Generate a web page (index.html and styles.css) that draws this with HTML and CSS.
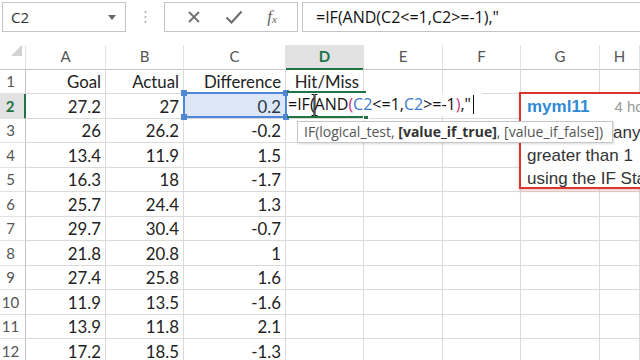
FILE: index.html
```html
<!DOCTYPE html>
<html lang="en">
<head>
  <meta charset="UTF-8" />
  <title>Excel - Hit/Miss</title>
  <link rel="stylesheet" href="styles.css">
</head>
<body>
  <div class="topbar">
    <div class="namebox">
      <span>C2</span>
      <svg width="8" height="5" viewBox="0 0 8 5"><path d="M0 0h8L4 5z" fill="#666"/></svg>
    </div>
    <div class="grip">
      <svg width="3" height="14" viewBox="0 0 3 14"><circle cx="1.5" cy="2" r="1" fill="#aaa"/><circle cx="1.5" cy="7" r="1" fill="#aaa"/><circle cx="1.5" cy="12" r="1" fill="#aaa"/></svg>
    </div>
    <div class="fxbox">
      <svg width="14" height="14" viewBox="0 0 14 14"><path d="M2 2l10 10M12 2L2 12" stroke="#707070" stroke-width="1.8" fill="none"/></svg>
      <svg width="18" height="14" viewBox="0 0 18 14"><path d="M1.5 7.5l5 5L16.5 1.5" stroke="#707070" stroke-width="2.2" fill="none"/></svg>
      <span class="fx">f<sub>x</sub></span>
    </div>
    <div class="formula">=IF(AND(C2&lt;=1,C2&gt;=-1),"</div>
  </div>

  <div class="sheet">
    <div class="row head">
      <div class="corner"><svg width="11" height="11" viewBox="0 0 11 11"><path d="M11 0v11H0z" fill="#d2d2d2"/></svg></div>
      <div class="ch">A</div><div class="ch">B</div><div class="ch">C</div>
      <div class="ch on">D</div><div class="ch">E</div><div class="ch">F</div>
      <div class="ch">G</div><div class="ch">H</div>
    </div>
    <div class="row">
      <div class="rh">1</div>
      <div class="c">Goal</div><div class="c">Actual</div><div class="c">Difference</div>
      <div class="c">Hit/Miss</div><div class="c"></div><div class="c"></div><div class="c"></div><div class="c"></div>
    </div>
    <div class="row">
      <div class="rh on">2</div>
      <div class="c">27.2</div><div class="c">27</div><div class="c">0.2</div>
      <div class="c"></div><div class="c"></div><div class="c"></div><div class="c"></div><div class="c"></div>
    </div>
    <div class="row">
      <div class="rh">3</div>
      <div class="c">26</div><div class="c">26.2</div><div class="c">-0.2</div>
      <div class="c"></div><div class="c"></div><div class="c"></div><div class="c"></div><div class="c"></div>
    </div>
    <div class="row">
      <div class="rh">4</div>
      <div class="c">13.4</div><div class="c">11.9</div><div class="c">1.5</div>
      <div class="c"></div><div class="c"></div><div class="c"></div><div class="c"></div><div class="c"></div>
    </div>
    <div class="row">
      <div class="rh">5</div>
      <div class="c">16.3</div><div class="c">18</div><div class="c">-1.7</div>
      <div class="c"></div><div class="c"></div><div class="c"></div><div class="c"></div><div class="c"></div>
    </div>
    <div class="row">
      <div class="rh">6</div>
      <div class="c">25.7</div><div class="c">24.4</div><div class="c">1.3</div>
      <div class="c"></div><div class="c"></div><div class="c"></div><div class="c"></div><div class="c"></div>
    </div>
    <div class="row">
      <div class="rh">7</div>
      <div class="c">29.7</div><div class="c">30.4</div><div class="c">-0.7</div>
      <div class="c"></div><div class="c"></div><div class="c"></div><div class="c"></div><div class="c"></div>
    </div>
    <div class="row">
      <div class="rh">8</div>
      <div class="c">21.8</div><div class="c">20.8</div><div class="c">1</div>
      <div class="c"></div><div class="c"></div><div class="c"></div><div class="c"></div><div class="c"></div>
    </div>
    <div class="row">
      <div class="rh">9</div>
      <div class="c">27.4</div><div class="c">25.8</div><div class="c">1.6</div>
      <div class="c"></div><div class="c"></div><div class="c"></div><div class="c"></div><div class="c"></div>
    </div>
    <div class="row">
      <div class="rh">10</div>
      <div class="c">11.9</div><div class="c">13.5</div><div class="c">-1.6</div>
      <div class="c"></div><div class="c"></div><div class="c"></div><div class="c"></div><div class="c"></div>
    </div>
    <div class="row">
      <div class="rh">11</div>
      <div class="c">13.9</div><div class="c">11.8</div><div class="c">2.1</div>
      <div class="c"></div><div class="c"></div><div class="c"></div><div class="c"></div><div class="c"></div>
    </div>
    <div class="row">
      <div class="rh">12</div>
      <div class="c">17.2</div><div class="c">18.5</div><div class="c">-1.3</div>
      <div class="c"></div><div class="c"></div><div class="c"></div><div class="c"></div><div class="c"></div>
    </div>

    <!-- C2 range reference -->
    <div class="ref">
      <i class="h tl"></i><i class="h tr"></i><i class="h bl"></i><i class="h br"></i>
    </div>

    <!-- active cell D2 being edited -->
    <div class="active"><i class="fill"></i></div>
    <div class="edit">=IF(AND<span class="p">(</span><span class="b">C2</span>&lt;=1,<span class="b">C2</span>&gt;=-1<span class="p">)</span>,"<span class="caret"></span></div>
    <svg class="ibeam" width="7" height="22" viewBox="0 0 7 22"><path d="M0.5 0.5h2.5v21H0.5M6.5 0.5H4v21h2.5" stroke="#111" stroke-width="1" fill="none"/></svg>

    <!-- comment -->
    <div class="comment">
      <div class="who"><b>myml11</b><span>4 hours ago</span></div>
      <p>Show Hit if any</p>
      <p>greater than 1</p>
      <p>using the IF Statement</p>
    </div>

    <div class="tip">IF(logical_test, <b>[value_if_true]</b>, [value_if_false])</div>
  </div>
</body>
</html>
```

FILE: styles.css
```css
:root {
  --grid: #dadada;
  --head-line: #c4c4c4;
  --green: #217346;
  --blue: #4f86d6;
  --red: #d9362d;
}
* {
  margin: 0;
  padding: 0;
  box-sizing: border-box;
}
body {
  width: 640px;
  height: 360px;
  overflow: hidden;
  background: #fff;
  font-family: Lato, sans-serif;
  color: #222;
}

/* formula bar */
.topbar {
  height: 45px;
  display: flex;
  align-items: flex-start;
  padding: 2px 0 0 2px;
}
.namebox {
  width: 124px;
  height: 30px;
  border: 1px solid var(--head-line);
  display: flex;
  align-items: center;
  justify-content: space-between;
  padding: 0 9px 0 8px;
  font-family: "Open Sans", sans-serif;
  font-size: 15px;
  color: #333;
}
.grip {
  width: 38px;
  height: 30px;
  display: flex;
  align-items: center;
  justify-content: center;
}
.fxbox {
  width: 134px;
  height: 30px;
  border: 1px solid var(--head-line);
  display: flex;
  align-items: center;
  justify-content: space-around;
  padding: 0 8px 0 10px;
}
.fx {
  font-family: "Liberation Serif", serif;
  font-style: italic;
  font-size: 17px;
  color: #666;
}
.fx sub {
  font-size: 11px;
  vertical-align: -1px;
}
.formula {
  flex: 1;
  margin-left: 4px;
  height: 30px;
  border: 1px solid var(--head-line);
  border-right: none;
  padding-left: 13px;
  font-family: "Open Sans", sans-serif;
  font-size: 16px;
  line-height: 28px;
  color: #111;
}

/* sheet */
.sheet {
  position: relative;
}
.row {
  display: grid;
  grid-template-columns: 26px 80px 78px 102px 78px 79px 78px 79px 1fr;
  height: 24.5px;
}
.row.head {
  height: 24px;
}
.corner {
  border-right: 1px solid #e2e2e2;
  border-bottom: 1px solid var(--head-line);
  display: flex;
  justify-content: flex-end;
  padding-right: 3px;
}
.ch {
  border-right: 1px solid #e2e2e2;
  border-bottom: 1px solid var(--head-line);
  text-align: center;
  font-size: 15px;
  line-height: 23px;
  color: #555;
}
.ch.on {
  background: #e2e2e2;
  border-bottom: 2px solid var(--green);
  color: var(--green);
  font-weight: bold;
}
.rh {
  border-right: 1px solid var(--head-line);
  border-bottom: 1px solid #e2e2e2;
  text-align: center;
  padding-right: 4px;
  font-size: 15px;
  line-height: 24px;
  color: #555;
}
.rh.on {
  background: #e2e2e2;
  border-right: 2px solid var(--green);
  color: var(--green);
  font-weight: bold;
}
.c {
  border-right: 1px solid var(--grid);
  border-bottom: 1px solid var(--grid);
  text-align: right;
  padding-right: 4px;
  font-size: 16.8px;
  line-height: 25px;
  white-space: nowrap;
  overflow: hidden;
}

/* range reference on C2 */
.ref {
  position: absolute;
  left: 183px;
  top: 47px;
  width: 104px;
  height: 26px;
  background: rgba(79, 134, 214, 0.2);
  border: 2px solid var(--blue);
}
.h {
  position: absolute;
  width: 6px;
  height: 6px;
  background: var(--blue);
}
.tl { left: -4px; top: -4px; }
.tr { right: -4px; top: -4px; }
.bl { left: -4px; bottom: -4px; }
.br { right: -4px; bottom: -4px; }

/* active cell */
.active {
  position: absolute;
  left: 287px;
  top: 46px;
  width: 79px;
  height: 27px;
  border-top: 2px solid var(--green);
  border-bottom: 2px solid var(--green);
}
.fill {
  position: absolute;
  right: -3px;
  bottom: -4px;
  width: 6px;
  height: 6px;
  background: var(--green);
  border: 1px solid #fff;
}
.edit {
  position: absolute;
  left: 288px;
  top: 48px;
  width: 194px;
  height: 23px;
  background: #fff;
  font-family: "Open Sans", sans-serif;
  font-size: 16px;
  line-height: 23px;
  color: #111;
  white-space: nowrap;
}
.edit .b { color: #3d7bd0; }
.edit .p { color: #c23a7a; }
.caret {
  display: inline-block;
  width: 1px;
  height: 19px;
  background: #111;
  margin-left: 2px;
  vertical-align: -4px;
}
.ibeam {
  position: absolute;
  left: 311px;
  top: 49px;
}

/* comment box */
.comment {
  position: absolute;
  left: 519px;
  top: 47px;
  width: 140px;
  height: 97px;
  background: #fff;
  border: 2px solid var(--red);
  padding: 1px 0 0 6px;
  font-family: "Liberation Sans", Arial, sans-serif;
  font-size: 17px;
  line-height: 23px;
  color: #333;
  white-space: nowrap;
  overflow: hidden;
  box-shadow: 0 2px 3px rgba(217, 54, 45, 0.25);
}
.who {
  margin-bottom: 3px;
}
.who b {
  color: #2f8ad6;
  margin-right: 25px;
}
.who span {
  color: #999;
  font-size: 15px;
}

/* function tooltip */
.tip {
  position: absolute;
  left: 297px;
  top: 76px;
  width: 316px;
  height: 22px;
  background: #fff;
  border: 1px solid #c6c6c6;
  padding-left: 6px;
  font-family: "Open Sans", sans-serif;
  font-size: 14px;
  line-height: 20px;
  color: #555;
  white-space: nowrap;
  overflow: hidden;
  box-shadow: 1px 1px 2px rgba(0, 0, 0, 0.15);
}
.tip b {
  color: #333;
}
```
